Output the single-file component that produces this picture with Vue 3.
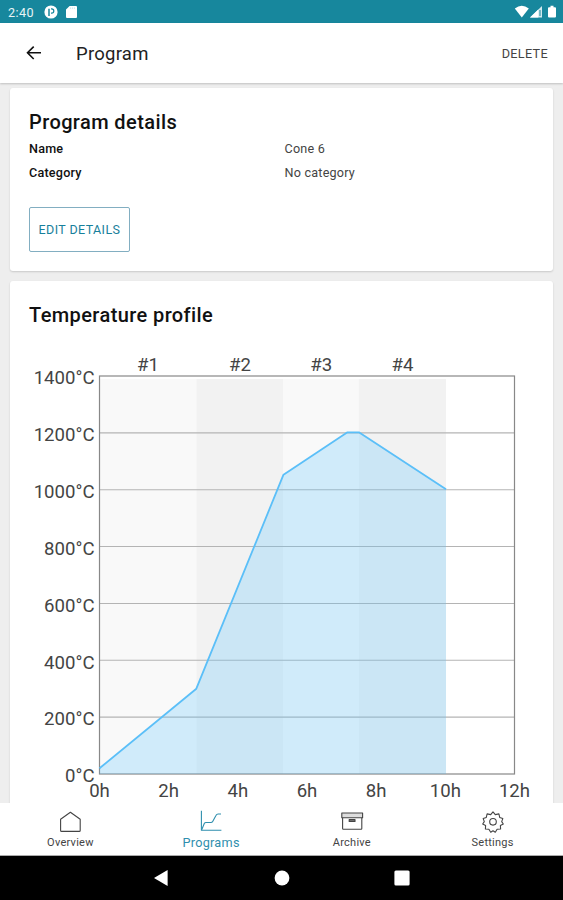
<script setup>
import { computed, ref } from 'vue'

const active = ref('Programs')

const details = [
  { label: 'Name', value: 'Cone 6' },
  { label: 'Category', value: 'No category' },
]

const tabs = ['Overview', 'Programs', 'Archive', 'Settings']

// plot area inside the svg
const plot = { left: 70.5, top: 24, width: 415, height: 398 }
const maxTemp = 1400
const maxHours = 12

const px = (h) => plot.left + (h / maxHours) * plot.width
const py = (t) => plot.top + plot.height - (t / maxTemp) * plot.height

const temps = [0, 200, 400, 600, 800, 1000, 1200, 1400]
const hours = [0, 2, 4, 6, 8, 10, 12]

const segments = [
  { name: '#1', from: 0, to: 2.8 },
  { name: '#2', from: 2.8, to: 5.32 },
  { name: '#3', from: 5.32, to: 7.5 },
  { name: '#4', from: 7.5, to: 10.02 },
]

const points = [
  [0, 20],
  [2.8, 300],
  [5.32, 1053],
  [7.17, 1202],
  [7.5, 1202],
  [10.02, 1002],
]

const line = computed(() => points.map(([h, t]) => `${px(h)},${py(t)}`).join(' '))
const area = computed(() => `${px(0)},${py(0)} ${line.value} ${px(10.02)},${py(0)}`)
</script>

<template>
  <div class="screen">
    <div class="status">
      <span class="clock">2:40</span>
      <svg class="st-app" width="14" height="14" viewBox="0 0 14 14">
        <circle cx="7" cy="7" r="6.6" fill="#fff" />
        <path d="M5 11V3.8" fill="none" stroke="#17879d" stroke-width="1.5" />
        <path d="M7 3.8h.6a2.2 2.2 0 0 1 0 4.4H7" fill="none" stroke="#17879d" stroke-width="1.2" />
      </svg>
      <svg class="st-card" width="11" height="12" viewBox="0 0 11 12">
        <path d="M3.6 0H10a1 1 0 0 1 1 1v10a1 1 0 0 1-1 1H1a1 1 0 0 1-1-1V3.6z" fill="#fff" />
        <path d="M4.4 1.4v1.5M6.4 1.4v1.5M8.4 1.4v1.5" stroke="#b5dbe3" stroke-width=".7" />
      </svg>
      <svg class="st-right" width="44" height="14" viewBox="0 0 44 14">
        <path d="M0.8 3.4Q7.8-1.8 14.8 3.4L7.8 12.5z" fill="#fff" />
        <path d="M28 1v11.5H16z" fill="#d2e9ee" />
        <path d="M24.3 4.6v7.9H16z" fill="#fff" />
        <path d="M26 5v6" stroke="#17879d" stroke-width="1" />
        <path d="M36.5 0.8h3v1.4H41a1 1 0 0 1 1 1v8.4a1 1 0 0 1-1 1h-6a1 1 0 0 1-1-1V3.2a1 1 0 0 1 1-1h1.5z" fill="#fff" />
      </svg>
    </div>

    <header class="bar">
      <svg class="back" width="16" height="16" viewBox="0 0 16 16">
        <path d="M15 7.8H1.6M7.7 1.6L1.5 7.8l6.2 6.2" fill="none" stroke="#111" stroke-width="1.6" />
      </svg>
      <h1 class="bar-title">Program</h1>
      <button class="delete">DELETE</button>
    </header>

    <main class="content">
      <section class="card info">
        <h2 class="card-title">Program details</h2>
        <dl class="rows">
          <div v-for="d in details" :key="d.label" class="row">
            <dt>{{ d.label }}</dt>
            <dd>{{ d.value }}</dd>
          </div>
        </dl>
        <button class="edit">EDIT DETAILS</button>
      </section>

      <section class="card profile">
        <h2 class="card-title">Temperature profile</h2>
        <svg class="chart" width="505" height="450" viewBox="0 0 505 450">
          <rect
            v-for="(s, i) in segments"
            :key="s.name"
            :x="px(s.from)"
            :y="plot.top + 3"
            :width="px(s.to) - px(s.from)"
            :height="plot.height - 3"
            :fill="i % 2 ? '#f2f2f2' : '#f9f9f9'"
          />
          <line
            v-for="t in temps.slice(1, -1)"
            :key="t"
            class="grid"
            :x1="plot.left"
            :x2="plot.left + plot.width"
            :y1="py(t)"
            :y2="py(t)"
          />
          <rect class="frame" :x="plot.left" :y="plot.top" :width="plot.width" :height="plot.height" />
          <polygon class="area" :points="area" />
          <polyline class="line" :points="line" />

          <text v-for="t in temps" :key="'t' + t" class="label" text-anchor="end" x="65.5" :y="py(t) + 8.3">{{ t }}°C</text>
          <text v-for="h in hours" :key="'h' + h" class="label" text-anchor="middle" :x="px(h)" y="445">{{ h }}h</text>
          <text
            v-for="s in segments"
            :key="'s' + s.name"
            class="label"
            text-anchor="middle"
            :x="px((s.from + s.to) / 2)"
            y="19"
          >{{ s.name }}</text>
        </svg>
      </section>
    </main>

    <nav class="tabs">
      <button
        v-for="t in tabs"
        :key="t"
        class="tab"
        :class="{ active: t === active }"
        @click="active = t"
      >
        <svg class="tab-icon" width="24" height="24" viewBox="0 0 24 24">
          <path v-if="t === 'Overview'" d="M2.6 9.3L12.4 2.3l9.8 7V20.4a1 1 0 0 1-1 1H3.6a1 1 0 0 1-1-1z" />
          <template v-else-if="t === 'Programs'">
            <path d="M2.4.8V20.2H22.4" />
            <path d="M2.6 20L5.4 13.2Q5.9 12.5 6.9 12.5H11.9Q13.1 12.5 13.7 11.4L17.1 5.3Q17.7 4 19.1 4H22" />
          </template>
          <template v-else-if="t === 'Archive'">
            <rect x="1.8" y="3" width="20.8" height="4.7" fill="#ddd" />
            <path d="M2.6 7.7v10.9a.7.7 0 0 0 .7.7h17.8a.7.7 0 0 0 .7-.7V7.7" />
            <rect x="9.2" y="9.6" width="5.8" height="1.8" fill="#999" />
          </template>
          <template v-else>
            <path d="M12 1.8l2.3 2.8 3.6-.7.8 3.5 3.1 1.2-1.1 3 1.6 2.4-2.9 1.6.2 3.4-3.5.3-1.8 2.9-2.3-1.5-2.3 1.5-1.8-2.9-3.5-.3.2-3.4-2.9-1.6 1.6-2.4-1.1-3 3.1-1.2.8-3.5 3.6.7z" />
            <circle cx="12" cy="11.8" r="3.3" />
          </template>
        </svg>
        <span class="tab-label">{{ t }}</span>
      </button>
    </nav>

    <div class="sys">
      <svg width="16" height="18" viewBox="0 0 16 18"><path d="M0 9L13.6 1v16z" fill="#fff" /></svg>
      <svg width="16" height="16" viewBox="0 0 16 16"><circle cx="8" cy="8" r="7.4" fill="#fff" /></svg>
      <svg width="16" height="16" viewBox="0 0 16 16"><rect x=".4" y=".4" width="15.2" height="15.2" rx="1.5" fill="#fff" /></svg>
    </div>
  </div>
</template>

<style>
body {
  margin: 0;
}
</style>

<style scoped>
.screen {
  display: flex;
  flex-direction: column;
  width: 563px;
  height: 900px;
  overflow: hidden;
  background: #eee;
  font-family: Roboto, 'Liberation Sans', sans-serif;
}

h1,
h2,
dl,
dd {
  margin: 0;
}

button {
  font-family: inherit;
  background: none;
  border: none;
  padding: 0;
  cursor: pointer;
}

/* STATUS BAR */
.status {
  flex: none;
  display: flex;
  align-items: center;
  height: 23px;
  padding: 1px 7px 0 8px;
  box-sizing: border-box;
  background: #17879d;
}

.clock {
  width: 36px;
  font-size: 12.6px;
  letter-spacing: 0.4px;
  color: #e8f4f6;
}

.st-card {
  margin-left: 8px;
}

.st-right {
  margin-left: auto;
  margin-right: -2px;
}

/* APP BAR */
.bar {
  flex: none;
  display: flex;
  align-items: center;
  height: 60px;
  padding: 0 15px 0 26px;
  box-sizing: border-box;
  background: #fff;
  box-shadow: 0 1px 2px rgba(0, 0, 0, 0.2);
  position: relative;
}

.bar-title {
  margin: 2px 0 0 34px;
  font-size: 18.5px;
  font-weight: 400;
  letter-spacing: 0.25px;
  color: #222;
}

.delete {
  margin-left: auto;
  font-size: 12.7px;
  letter-spacing: 0.3px;
  color: #444;
}

/* CARDS */
.content {
  flex: 1;
  min-height: 0;
  overflow: hidden;
  padding: 5px 10px 0;
}

.card {
  padding: 0 19px;
  border-radius: 3px;
  background: #fff;
  box-shadow: 0 1px 2px rgba(0, 0, 0, 0.16);
}

.card-title {
  font-size: 20px;
  font-weight: 500;
  line-height: 24px;
  letter-spacing: 0.4px;
  color: #111;
}

.info {
  height: 183px;
  padding-top: 22px;
  box-sizing: border-box;
}

.rows {
  margin-top: 3px;
}

.row {
  display: grid;
  grid-template-columns: 255.5px 1fr;
  height: 24px;
  font-size: 12.6px;
  line-height: 24px;
  letter-spacing: 0.22px;
}

.row dt {
  font-weight: 500;
  color: #111;
}

.row dd {
  color: #444;
}

.edit {
  width: 101px;
  height: 45px;
  margin-top: 22px;
  border: 1px solid #82aec1;
  border-radius: 2px;
  font-size: 12.5px;
  letter-spacing: 0.4px;
  color: #17809b;
}

.profile {
  height: 540px;
  margin-top: 10px;
  padding-top: 22px;
}

/* CHART */
.chart {
  display: block;
  margin-top: 25px;
}

.grid {
  stroke: #b4b4b4;
  stroke-width: 1.1;
}

.frame {
  fill: none;
  stroke: #888;
  stroke-width: 1.2;
}

.area {
  fill: rgba(88, 196, 255, 0.25);
}

.line {
  fill: none;
  stroke: #5bbff8;
  stroke-width: 1.8;
  stroke-linejoin: round;
}

.label {
  font-size: 18.6px;
  fill: #444;
}

/* BOTTOM TABS */
.tabs {
  flex: none;
  display: grid;
  grid-template-columns: repeat(4, 1fr);
  height: 53px;
  box-sizing: border-box;
  background: #fff;
  border-bottom: 1px solid #aaa;
}

.tab {
  display: flex;
  flex-direction: column;
  align-items: center;
  padding-top: 7px;
  color: #444;
}

.tab-icon {
  fill: none;
  stroke: currentColor;
  stroke-width: 1.1;
  stroke-linejoin: round;
}

.tab-label {
  margin-top: 2px;
  font-size: 11px;
  line-height: 13px;
  letter-spacing: 0.25px;
}

.tab.active {
  color: #2f8fae;
}

.tab.active .tab-label {
  font-size: 12.7px;
}

/* SYSTEM NAV */
.sys {
  flex: none;
  display: flex;
  align-items: center;
  justify-content: center;
  gap: 104px;
  height: 44px;
  background: #000;
}
</style>
